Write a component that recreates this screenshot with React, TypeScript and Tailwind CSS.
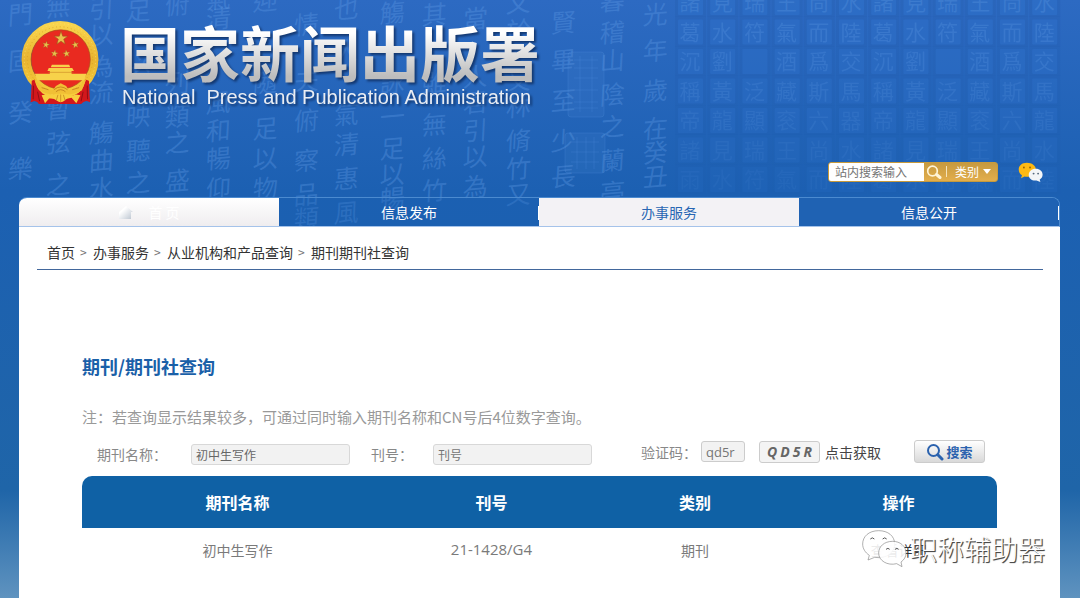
import { useState } from 'react'
import clsx from 'clsx'

const tabs = ['首 页', '信息发布', '办事服务', '信息公开']

const crumbs = ['首页', '办事服务', '从业机构和产品查询', '期刊期刊社查询']

const rows = [{ name: '初中生写作', code: '21-1428/G4', type: '期刊' }]

// x of the column, then [character, baseline] pairs
const script: [number, [string, number][]][] = [
  [20, [['門', 24], ['固', 70], ['癸', 122], ['樂', 178]]],
  [58, [['無', 16], ['暫', 118], ['弦', 152], ['之', 194]]],
  [101, [['引', 18], ['以', 44], ['為', 76], ['流', 102], ['觴', 142], ['曲', 170], ['水', 198]]],
  [138, [['足', 20], ['以', 72], ['映', 126], ['聽', 160], ['之', 192]]],
  [177, [['俯', 14], ['列', 92], ['類', 126], ['之', 152], ['盛', 190]]],
  [218, [['氣', 8], ['清', 28], ['風', 112], ['和', 140], ['暢', 168], ['仰', 198]]],
  [265, [['迎', 10], ['隨', 92], ['足', 138], ['以', 168], ['物', 198]]],
  [306, [['情', 34], ['夫', 90], ['俯', 130], ['察', 170], ['品', 204], ['類', 228]]],
  [346, [['也', 18], ['人', 60], ['氣', 124], ['清', 154], ['惠', 188], ['風', 222]]],
  [392, [['觴', 22], ['詠', 92], ['一', 126], ['足', 158], ['以', 184], ['暢', 208]]],
  [434, [['其', 24], ['雖', 92], ['無', 134], ['絲', 168], ['竹', 200]]],
  [475, [['當', 28], ['人', 86], ['君', 112], ['引', 140], ['以', 166], ['為', 196]]],
  [518, [['文', 12], ['於', 40], ['又', 90], ['林', 116], ['脩', 150], ['竹', 178], ['又', 204]]],
  [563, [['賢', 32], ['畢', 70], ['至', 110], ['少', 150], ['長', 186]]],
  [612, [['暮', 10], ['稽', 42], ['山', 70], ['陰', 104], ['之', 136], ['蘭', 170], ['亭', 202]]],
  [655, [['光', 24], ['年', 60], ['歲', 100], ['在', 138], ['癸', 162], ['丑', 186]]],
]

const tiles = [
  '諸見瑞王尚水諸見瑞王尚水',
  '葛水符氣而陸葛水符氣而陸',
  '沉劉　酒爲交沉劉　酒爲交',
  '稱黃泛藏斯馬稱黃泛藏斯馬',
  '帝龍顯衮六器帝龍顯衮六龍',
  '諸見瑞王尚水諸見瑞王尚水',
  '雨水符氣而陸葛水符氣而陸',
]

function Backdrop() {
  return (
    <svg className="absolute top-0 left-0 w-[1080px] h-[227px]" viewBox="0 0 1080 227" aria-hidden="true">
      <g fill="#5f9be6" fillOpacity="0.36" fontFamily="'Noto Sans CJK TC', sans-serif" fontSize="25" fontWeight="400" textAnchor="middle">
        {script.map(([x, chars]) =>
          chars.map(([char, y]) => (
            <text key={`${x}-${y}`} x={x} y={y} transform={`rotate(-5 ${x} ${y}) translate(${x} ${y}) skewX(-8) translate(${-x} ${-y})`}>
              {char}
            </text>
          ))
        )}
      </g>
      <g fill="#5f9be6" fillOpacity="0.1" stroke="#5f9be6" strokeOpacity="0.2">
        <rect x="568" y="52" width="36" height="65" rx="3" />
        <rect x="565" y="133" width="40" height="40" rx="3" />
        <path d="M574 60 H598 M574 68 H598 M574 78 H598 M574 90 H598 M574 102 H598 M574 108 H598 M580 56 V112 M592 56 V112" fill="none" />
        <path d="M571 142 H599 M571 152 H599 M571 162 H599 M577 137 V169 M586 137 V169 M594 137 V169" fill="none" />
      </g>
      {tiles.map((line, r) =>
        line.split('').map((char, c) => {
          const x = 678 + c * 32.2
          const y = -10 + r * 29.5
          return (
            <g key={`${r}-${c}`} opacity={1 - r * 0.12}>
              <rect x={x - 3} y={y - 3} width="31" height="30" fill="#1c4f9c" fillOpacity="0.16" />
              <rect x={x} y={y} width="25" height="25" rx="1" fill="#2f74cf" fillOpacity="0.5" />
              <text x={x + 12} y={y + 20} textAnchor="middle" fontSize="21" fontFamily="'Noto Sans CJK TC', sans-serif" fill="#5a96e2" fillOpacity="0.34">
                {char}
              </text>
            </g>
          )
        })
      )}
    </svg>
  )
}

const star = 'M0 -10 L2.4 -3.1 L9.5 -3.1 L3.8 1.2 L5.9 8.1 L0 4 L-5.9 8.1 L-3.8 1.2 L-9.5 -3.1 L-2.4 -3.1Z'

function Emblem() {
  return (
    <svg className="w-[78px] h-[84px] shrink-0" viewBox="32 36 228 247" role="img" aria-label="国徽">
      <defs>
        <linearGradient id="gold" x1="0" y1="0" x2="0" y2="1">
          <stop offset="0" stopColor="#f8d44c" />
          <stop offset="0.5" stopColor="#e9b430" />
          <stop offset="1" stopColor="#f6cd3c" />
        </linearGradient>
      </defs>
      <path d="M70 206 L60 275 Q76 266 84 280 L208 280 Q220 266 234 272 L222 206Z" fill="#d3171c" />
      <path d="M74 216 L70 268 M84 224 L88 276 M218 216 L223 266 M208 226 L206 276" stroke="#8f0f14" strokeWidth="3" fill="none" />
      <circle cx="146" cy="149" r="99" fill="none" stroke="url(#gold)" strokeWidth="28" />
      <circle cx="146" cy="149" r="105" fill="none" stroke="#fbe07a" strokeWidth="2" strokeDasharray="3 8" />
      <circle cx="146" cy="149" r="96" fill="none" stroke="#d79a22" strokeWidth="2" strokeDasharray="3 8" />
      <path d="M63 212 L60 275 Q76 266 88 279 L104 279 L92 246 Q76 235 72 208Z M231 212 L234 275 Q218 266 206 279 L190 279 L202 246 Q216 235 221 208Z" fill="#d3171c" />
      <path d="M68 226 L67 266 M80 244 L86 272 M226 226 L227 266 M214 244 L208 272" stroke="#930f15" strokeWidth="3" />
      <circle cx="148" cy="149" r="87" fill="#e92a20" stroke="#a8521a" strokeWidth="2" />
      <g fill="#e9c04c" stroke="#9c5218" strokeWidth="0.8">
        <path d={star} transform="translate(149 87) scale(2.1)" />
        <path d={star} transform="translate(105 106) rotate(12) scale(1.15)" />
        <path d={star} transform="translate(191 106) rotate(-12) scale(1.15)" />
        <path d={star} transform="translate(130 132) rotate(8) scale(1.15)" />
        <path d={star} transform="translate(165 132) rotate(-8) scale(1.15)" />
      </g>
      <g fill="#f7d24a">
        <path d="M122 165 H173 L176 172 H119Z" />
        <path d="M113 174 H182 L187 183 H109Z" />
        <path d="M116 182 H180 V192 H116Z" />
        <path d="M72 191 H224 L217 210 H79Z" />
      </g>
      <path d="M110 187 H186" stroke="#c27a1e" strokeWidth="1.5" />
      <path d="M70 208 Q104 242 126 238 L134 227 L148 219 L164 227 L171 238 Q198 240 224 206 L210 240 Q184 252 168 252 L128 252 Q104 252 84 238Z" fill="#f1bf35" />
      <path d="M92 232 L112 238 M202 232 L182 238 M128 238 Q148 222 168 238 M134 244 Q148 232 162 244" stroke="#b56f17" strokeWidth="2" fill="none" />
      <path d="M104 252 Q124 258 134 250 L162 250 Q174 258 194 252 L206 254 L194 278 L180 262 Q164 264 160 270 Q148 280 136 270 Q128 262 114 264 L102 278 L92 254Z" fill="#f8ce3e" />
      <path d="M148 252 V274 M140 253 L135 270 M156 253 L161 270" stroke="#bd7a1b" strokeWidth="2" />
    </svg>
  )
}

function Wechat() {
  return (
    <svg className="w-[26px] h-5" viewBox="0 0 78 62" role="img" aria-label="微信">
      <path d="M26 2 C11 2 1 11 1 23 C1 31 5 37 11 41 L8 50 L19 45 C39 48 54 38 54 23 C54 11 42 2 26 2Z" fill="#fdb913" />
      <circle cx="17" cy="17" r="3" fill="#9a6606" />
      <circle cx="36" cy="17" r="3" fill="#9a6606" />
      <path d="M54 21 C41 21 32 29 32 40 C32 52 43 59 56 57 L68 62 L66 54 C72 51 75 46 75 39 C75 29 66 21 54 21Z" fill="#f4f6f8" />
      <circle cx="47" cy="36" r="3" fill="#56697d" />
      <circle cx="61" cy="36" r="3" fill="#56697d" />
    </svg>
  )
}

function Header() {
  return (
    <header>
      <div className="flex items-start pt-[21px] pl-0.5 h-[162px]">
        <Emblem />
        <div className="ml-[21px] drop-shadow-[2px_2px_1px_rgba(10,35,80,0.7)]">
          <h1 className="-mt-1.5 text-[60px] leading-[72px] font-bold whitespace-nowrap bg-linear-to-b from-white from-25% to-[#bdbdbd] to-85% bg-clip-text text-transparent">
            国家新闻出版署
          </h1>
          <p className="pl-0.5 text-xl leading-5 text-[#e9edf3] whitespace-pre font-['Liberation_Sans',sans-serif]">
            National  Press and Publication Administration
          </p>
        </div>
      </div>
      <form className="flex items-center justify-end pr-4 mb-[15px]" onSubmit={(e) => e.preventDefault()}>
        <div className="flex h-5 w-[170px] rounded-[3px] border border-[#c79a3c] bg-linear-to-b from-[#c69a40] to-[#e3ae4c] overflow-hidden">
          <input
            aria-label="站内搜索"
            placeholder="站内搜索输入"
            className="w-[95px] pl-1.5 bg-white text-xs text-gray-700 placeholder:text-[#757575] outline-none"
          />
          <button type="submit" aria-label="搜索" className="w-[22px] flex items-center pl-0.5">
            <svg className="w-4 h-4" viewBox="0 0 16 16" fill="none" stroke="#fff4d6">
              <circle cx="6.5" cy="7" r="4.8" strokeWidth="1.7" />
              <path d="M10.5 10.5 L14 13.5" strokeWidth="3" strokeLinecap="round" />
            </svg>
          </button>
          <span className="w-px h-[11px] mt-[3px] bg-[#f5e3bb]" />
          <div className="relative flex-1">
            <select aria-label="类别" className="block w-full h-[18px] pl-2 appearance-none bg-transparent text-xs leading-[18px] text-white outline-none">
              <option>类别</option>
            </select>
            <svg className="absolute right-1.5 top-1.5 w-2 h-[5px] pointer-events-none" viewBox="0 0 8 5">
              <path d="M0 0 H8 L4 5Z" fill="#fff" />
            </svg>
          </div>
        </div>
        <a href="#wechat" className="ml-5">
          <Wechat />
        </a>
      </form>
    </header>
  )
}

function Nav() {
  return (
    <nav className="grid grid-cols-4 h-[30px] rounded-t-lg border-t border-b border-t-[#4b8ad0] border-b-[#a5c3ea] border-r border-r-[#4b8ad0] overflow-hidden text-sm">
      {tabs.map((tab, i) => (
        <a
          key={tab}
          href="#"
          className={clsx(
            'relative flex items-center justify-center',
            i === 0 && 'bg-linear-to-b from-white to-[#efedef] text-white',
            i === 1 && 'bg-[#1c5fb2]/30 text-white',
            i === 2 && 'bg-[#f3f2f5] text-[#2766b3]',
            i === 3 && 'bg-[#1f62b3] text-white'
          )}
        >
          {i === 0 && (
            <svg className="w-4 h-4 mr-3.5" viewBox="0 0 16 16">
              <defs>
                <linearGradient id="roof" x1="0" y1="0" x2="1" y2="1">
                  <stop offset="0.3" stopColor="#fff" />
                  <stop offset="1" stopColor="#b9c3cf" />
                </linearGradient>
              </defs>
              <path d="M1 8 L8 2 L15 8 L13 8 V15 H1Z" fill="url(#roof)" />
            </svg>
          )}
          {tab}
          {(i === 1 || i === 3) && <span className="absolute right-0 top-2 w-px h-3.5 bg-white" />}
        </a>
      ))}
    </nav>
  )
}

const field = 'h-[21px] w-[159px] px-1 rounded-[3px] border border-[#d8d8d8] bg-[#f2f2f2] text-xs text-[#666] placeholder:text-[#757575] outline-none'

function SearchForm() {
  const [name, setName] = useState('初中生写作')
  const [code, setCode] = useState('qd5r')

  return (
    <form className="mt-[11px] mb-[11px] flex items-start pl-[15px] pr-3 text-sm leading-[22px] text-[#888]" onSubmit={(e) => e.preventDefault()}>
      <div className="flex items-center pt-[3px]">
        <label htmlFor="name" className="w-[94px]">期刊名称：</label>
        <input id="name" className={field} value={name} onChange={(e) => setName(e.target.value)} />
        <label htmlFor="cn" className="ml-[21px] w-[62px]">刊号：</label>
        <input id="cn" className={field} placeholder="刊号" />
      </div>
      <div className="ml-auto flex items-center whitespace-nowrap">
        <label htmlFor="captcha" className="w-[60px]">验证码：</label>
        <input
          id="captcha"
          className="h-[21px] w-11 px-1 rounded-[3px] border border-[#ccc] bg-[#f2f2f2] text-[13px] text-[#757575] outline-none font-['Open_Sans',sans-serif]"
          value={code}
          onChange={(e) => setCode(e.target.value)}
        />
        <span className="ml-3.5 w-[61px] h-[22px] flex items-center justify-center gap-[3px] rounded-[3px] border border-[#ccc] bg-[#f4f4f4] text-sm font-bold italic text-[#666] font-['Open_Sans',sans-serif]">
          {'QD5R'.split('').map((char) => (
            <span key={char}>{char}</span>
          ))}
        </span>
        <button type="button" className="ml-[5px] text-[#444]">点击获取</button>
        <button
          type="submit"
          className="ml-[33px] w-[71px] h-[23px] flex items-center justify-center gap-0.5 rounded-[3px] border border-[#ccc] bg-linear-to-b from-white to-[#d9d9d9] font-bold text-[13px] text-[#2b62ae]"
        >
          <svg className="w-[18px] h-[18px]" viewBox="0 0 18 18" fill="none" stroke="#2b62ae">
            <circle cx="7.5" cy="7.5" r="5.5" strokeWidth="2" />
            <path d="M11.8 11.8 L16 16" strokeWidth="3" strokeLinecap="round" />
          </svg>
          搜索
        </button>
      </div>
    </form>
  )
}

function ResultTable() {
  return (
    <table className="w-full table-fixed text-center">
      <thead>
        <tr className="h-[52px] text-base text-white">
          <th className="w-[34%] bg-[#0f61a5] rounded-tl-[10px]">期刊名称</th>
          <th className="w-[21.5%] bg-[#0f61a5]">刊号</th>
          <th className="w-[23%] bg-[#0f61a5]">类别</th>
          <th className="w-[21.5%] bg-[#0f61a5] rounded-tr-[10px]">操作</th>
        </tr>
      </thead>
      <tbody>
        {rows.map((row) => (
          <tr key={row.code} className="h-11 text-sm text-[#7a7a7a]">
            <td>{row.name}</td>
            <td className="text-[15px] font-['Open_Sans',sans-serif]">{row.code}</td>
            <td>{row.type}</td>
            <td>
              <a href="#detail" className="text-[#333]">查看详细</a>
            </td>
          </tr>
        ))}
      </tbody>
    </table>
  )
}

function Watermark() {
  return (
    <div className="absolute top-[530px] right-[35px] flex items-center">
      <svg className="w-12 h-[37px]" viewBox="0 0 132 111" aria-hidden="true">
        <g fill="#fff" fillOpacity="0.9" stroke="#888" strokeWidth="2">
          <path d="M50 2 C20 2 2 20 2 42 C2 56 10 68 22 76 L18 90 L38 82 C75 88 98 66 98 42 C98 18 78 2 50 2Z" />
          <path d="M92 34 C66 34 50 50 50 69 C50 92 76 108 104 101 L120 110 L117 96 C127 89 132 80 132 69 C132 48 114 34 92 34Z" />
        </g>
        <path d="M25 27 q6 -7 12 0 M62 27 q6 -7 12 0 M72 58 q6 -6 11 0 M99 58 q6 -6 11 0" fill="none" stroke="#555" strokeWidth="3" />
      </svg>
      <span className="ml-0.5 text-[27px] leading-9 font-light text-white [text-shadow:1px_1px_1px_#444,1px_1px_0px_#777]">职称辅助器</span>
    </div>
  )
}

export default function App() {
  return (
    <div className="relative min-h-screen flex flex-col bg-[linear-gradient(#2d6ac2_0%,#1c60b2_32%,#1f65a8_82%,#5f93bf_100%)] font-['Noto_Sans_CJK_SC',sans-serif]">
      <Backdrop />
      <div className="relative flex-1 flex flex-col ml-[19px] mr-5">
        <Header />
        <Nav />
        <main className="flex-1 bg-white">
          <div className="ml-[18px] mr-[17px] pl-2.5 h-[43px] pt-2 flex items-center gap-[5px] border-b border-[#42679c] text-sm text-[#333]">
            {crumbs.map((crumb, i) => (
              <span key={crumb} className="flex items-center gap-[5px]">
                {i > 0 && <span className="w-2 text-xs text-[#777]">&gt;</span>}
                <a href="#">{crumb}</a>
              </span>
            ))}
          </div>
          <section className="mx-[63px]">
            <h2 className="mt-[84px] text-lg leading-6 font-bold text-[#1a60a8]">期刊/期刊社查询</h2>
            <p className="mt-[27px] text-[15px] leading-6 text-[#999]">
              注：若查询显示结果较多，可通过同时输入期刊名称和CN号后4位数字查询。
            </p>
            <SearchForm />
            <ResultTable />
          </section>
        </main>
      </div>
      <Watermark />
    </div>
  )
}
